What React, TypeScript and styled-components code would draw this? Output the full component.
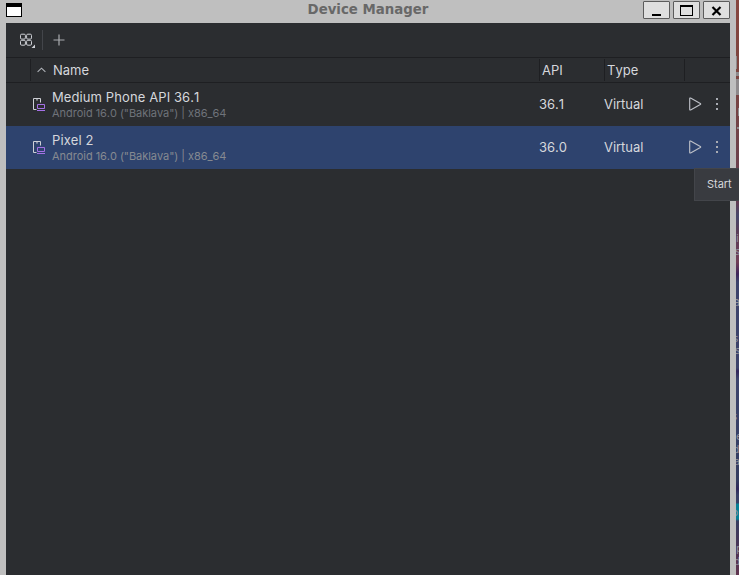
import React from "react";
import styled, { createGlobalStyle } from "styled-components";

const Global = createGlobalStyle`
  * { box-sizing: border-box; }
  html, body { margin: 0; overflow: hidden; background: #bfbfbf; }
  body { font-family: Inter, "Liberation Sans", sans-serif; font-size: 13px; font-kerning: none; color: #d5d7dc; }
`;

const Desktop = styled.div`
  position: relative;
  width: 739px;
  height: 575px;
  display: flex;
  overflow: hidden;
`;
const Frame = styled.div`
  width: 736px;
  flex: none;
  display: flex;
  flex-direction: column;
  background: #bfbfbf;
  padding: 0 6px;
`;
const Wallpaper = styled.div`
  flex: 1;
  position: relative;
  overflow: hidden;
  background: linear-gradient(#87463f 0, #7c453f 70px, #70434a 140px, #663b50 200px, #47486b 216px, #5a3e59 232px, #713f57 262px, #3f265b 274px, #3c436b 282px, #3d436b 368px, #33265c 371px, #3d446c 379px, #343d60 480px, #30285b 489px, #384066 495px, #384066 503px, #087f95 504px, #087f95 519px, #373e60 521px, #4a3557 547px, #613650 575px);
`;
const Speck = styled.span<{ $y: number; $w?: number; $h?: number; $x?: number }>`
  position: absolute;
  left: ${(p) => p.$x ?? 0}px;
  top: ${(p) => p.$y}px;
  width: ${(p) => p.$w ?? 3}px;
  height: ${(p) => p.$h ?? 2}px;
  background: #8e8a8c;
`;
const Letter = styled.span<{ $y: number; $x: number; $size?: number }>`
  position: absolute;
  left: ${(p) => p.$x}px;
  top: ${(p) => p.$y}px;
  font: ${(p) => p.$size ?? 10}px/12px "DejaVu Sans", sans-serif;
  color: #92929b;
`;

const TitleBar = styled.header`
  height: 23px;
  flex: none;
  display: grid;
  grid-template-columns: 88px 1fr 88px;
  align-items: start;
`;
const WindowIcon = styled.div`
  width: 16px;
  height: 14px;
  margin-top: 3px;
  border: 1px solid #000;
  border-top-width: 4px;
  background: #fff;
`;
const Title = styled.div`
  font: bold 13.33px/20px "DejaVu Sans", sans-serif;
  color: #686868;
  text-align: center;
  white-space: nowrap;
`;
const WindowButtons = styled.div`
  display: flex;
  gap: 3px;
  margin: 1px 0 0 1px;
`;
const WindowButton = styled.button`
  width: 27px;
  height: 18px;
  padding: 0;
  border: 1px solid #5c5c5c;
  border-radius: 1px;
  background: #dfdfdf;
  display: flex;
`;

const Content = styled.main`
  flex: 1;
  background: #2b2d30;
`;
const Toolbar = styled.div`
  height: 35px;
  display: flex;
  align-items: center;
  padding-left: 13px;
  border-bottom: 1px solid #1e1f22;
`;
const Separator = styled.i`
  width: 1px;
  height: 20px;
  margin: 0 10px 0 7px;
  background: #43454a;
`;
const columns = "24px 509px 65px 80px 46px";
const TableHeader = styled.div`
  height: 25px;
  display: grid;
  grid-template-columns: ${columns};
  border-bottom: 1px solid #1e1f22;
`;
const HeaderCell = styled.div<{ $line?: boolean }>`
  margin: 1px 0;
  padding-left: 2px;
  border-left: 1px solid ${(p) => (p.$line ? "#1e1f22" : "transparent")};
  display: flex;
  align-items: center;
  line-height: 20px;
  white-space: nowrap;
`;
const SortMark = styled.span`
  display: flex;
  margin: 0 7px 0 4px;
`;
const DeviceRow = styled.div<{ $selected?: boolean }>`
  height: 43px;
  display: grid;
  grid-template-columns: ${columns};
  background: ${(p) => (p.$selected ? "#2e436e" : "transparent")};
`;
const DeviceIconCell = styled.div`
  padding: 13px 0 0 26px;
  svg { display: block; }
`;
const NameCell = styled.div`
  padding: 5px 0 0 22px;
  white-space: nowrap;
`;
const DeviceName = styled.div`
  line-height: 18px;
  letter-spacing: 0.1px;
`;
const DeviceDetail = styled.div<{ $selected?: boolean }>`
  font-size: 11px;
  line-height: 14px;
  letter-spacing: -0.05px;
  color: ${(p) => (p.$selected ? "#868a91" : "#6f737a")};
`;
const ValueCell = styled.div`
  line-height: 43px;
`;
const Actions = styled.div`
  display: flex;
  align-items: center;
  padding: 0 0 1px 4px;
  gap: 14px;
`;
const Tooltip = styled.div`
  position: absolute;
  left: 694px;
  top: 168px;
  width: 60px;
  height: 33px;
  border: 1px solid #43454a;
  background: #393b40;
  padding-left: 12px;
  font-size: 11px;
  line-height: 31px;
`;

const GridIcon = () => (
  <svg width="16" height="16" viewBox="0 0 16 16" fill="none" stroke="#ced0d6">
    <rect x="1.5" y="2.2" width="4.9" height="4.9" rx="1.2" />
    <rect x="7.6" y="2.2" width="4.9" height="4.9" rx="1.2" />
    <rect x="1.5" y="8.3" width="4.9" height="4.9" rx="1.2" />
    <rect x="7.6" y="8.3" width="4.9" height="4.9" rx="1.2" />
    <path d="M16 12.5v4h-4z" fill="#ced0d6" stroke="none" />
  </svg>
);
const PlusIcon = () => (
  <svg width="12" height="12" viewBox="0 0 12 12">
    <path d="M6 .5v11M.5 6h11" stroke="#aaacb0" strokeWidth="1.2" />
  </svg>
);
const SortIcon = () => (
  <svg width="9" height="6" viewBox="0 0 9 6" fill="none">
    <path d="M.6 4.9L4.5 1.2l3.9 3.7" stroke="#b0b3b9" strokeWidth="1.1" />
  </svg>
);
const DeviceIcon = () => (
  <svg width="14" height="16" viewBox="0 0 14 16" fill="none">
    <path d="M4.5 13.5h-3v-11h7v4" stroke="#ced0d6" strokeLinejoin="round" />
    <path d="M4 3.9h2" stroke="#ced0d6" strokeWidth=".9" />
    <path d="M5.5 8.5h7v4h-7zM5 14.5h8" stroke="#a571e6" />
  </svg>
);
const PlayIcon = () => (
  <svg width="14" height="16" viewBox="0 0 14 16" fill="none">
    <path d="M1.7 2.7q0-1 .9-.6l9.7 5.4q.8.5 0 1l-9.7 5.4q-.9.4-.9-.6z" stroke="#bdc0c7" strokeWidth="1.15" />
  </svg>
);
const MoreIcon = () => (
  <svg width="2" height="12" viewBox="0 0 2 12" fill="#a9acb3">
    <path d="M0 0h2v2H0zM0 5h2v2H0zM0 10h2v2H0z" />
  </svg>
);

const devices = [
  { name: "Medium Phone API 36.1", api: "36.1", selected: false },
  { name: "Pixel 2", api: "36.0", selected: true },
];

export default function App() {
  return (
    <>
      <Global />
      <Desktop>
        <Frame>
          <TitleBar>
            <WindowIcon />
            <Title>Device Manager</Title>
            <WindowButtons>
              <WindowButton aria-label="Minimize">
                <svg width="25" height="16"><path d="M8 12h9v2H8z" /></svg>
              </WindowButton>
              <WindowButton aria-label="Maximize">
                <svg width="25" height="16"><path d="M6 3h13v11H6zM7 5v8h11V5z" fillRule="evenodd" /></svg>
              </WindowButton>
              <WindowButton aria-label="Close">
                <svg width="25" height="16"><path d="M8.5 5l8 8M16.5 5l-8 8" stroke="#000" strokeWidth="2.2" /></svg>
              </WindowButton>
            </WindowButtons>
          </TitleBar>
          <Content>
            <Toolbar>
              <GridIcon />
              <Separator />
              <PlusIcon />
            </Toolbar>
            <TableHeader>
              <HeaderCell />
              <HeaderCell $line>
                <SortMark><SortIcon /></SortMark>
                Name
              </HeaderCell>
              <HeaderCell $line>API</HeaderCell>
              <HeaderCell $line>Type</HeaderCell>
              <HeaderCell $line />
            </TableHeader>
            {devices.map((d) => (
              <DeviceRow key={d.name} $selected={d.selected}>
                <DeviceIconCell><DeviceIcon /></DeviceIconCell>
                <NameCell>
                  <DeviceName>{d.name}</DeviceName>
                  <DeviceDetail $selected={d.selected}>Android 16.0 ("Baklava") | x86_64</DeviceDetail>
                </NameCell>
                <ValueCell>{d.api}</ValueCell>
                <ValueCell>Virtual</ValueCell>
                <Actions><PlayIcon /><MoreIcon /></Actions>
              </DeviceRow>
            ))}
          </Content>
        </Frame>
        <Wallpaper>
          <Speck $y={56} $w={1} $h={13} />
          <Speck $y={72} $h={4} />
          <Speck $y={79} $h={16} />
          <Speck $y={108} $x={2} $w={1} $h={8} />
          <Speck $y={127} $x={1} $w={2} />
          <Letter $x={0} $y={233}>i</Letter>
          <Letter $x={-1} $y={246}>s</Letter>
          <Letter $x={-3} $y={296} $size={12}>a</Letter>
          <Letter $x={-3} $y={333}>s</Letter>
          <Letter $x={-1} $y={345}>s</Letter>
          <Letter $x={-4} $y={411}>s</Letter>
          <Letter $x={0} $y={431}>e</Letter>
          <Letter $x={-3} $y={444}>d</Letter>
          <Letter $x={-2} $y={456}>a</Letter>
          <Letter $x={-4} $y={507}>o</Letter>
          <Letter $x={0} $y={543}>p</Letter>
          <Letter $x={-2} $y={556}>d</Letter>
        </Wallpaper>
        <Tooltip role="tooltip">Start</Tooltip>
      </Desktop>
    </>
  );
}
